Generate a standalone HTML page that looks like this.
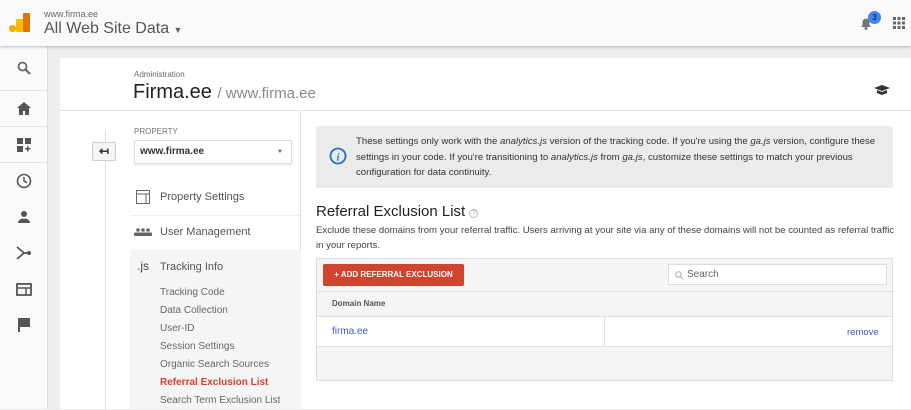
<!DOCTYPE html>
<html><head><meta charset="utf-8"><style>
*{box-sizing:border-box;margin:0;padding:0}
body{width:911px;height:409px;overflow:hidden;background:#ededed;font-family:"Liberation Sans",Arial,sans-serif;position:relative;color:#333}
.hdr{position:absolute;left:0;top:0;width:911px;height:46px;background:#fafafa;box-shadow:0 1px 3px rgba(0,0,0,.25);z-index:3}
.nav{position:absolute;left:0;top:46px;width:48px;height:363px;background:#fafafa;border-right:1px solid #ddd}
.nav .i{height:36px;display:flex;align-items:center;justify-content:center}
.card{position:absolute;left:60px;top:58px;width:851px;height:351px;background:#fff}
.abs{position:absolute}
.sub a{display:block;font-size:10px;color:#666;height:18px;line-height:18px}
</style></head><body>
<div class="hdr">
 <svg class="abs" style="left:9px;top:12px" width="21" height="21"><rect x="0" y="13" width="7" height="7" rx="3" fill="#f9ab00"/><rect x="7" y="7" width="7" height="13" rx="1" fill="#fbbc04"/><rect x="14" y="1" width="7" height="19" rx="1" fill="#e37400"/></svg>
 <div class="abs" style="left:44px;top:9px;font-size:9px;color:#666">www.firma.ee</div>
 <div class="abs" style="left:44px;top:20px;font-size:16px;color:#555">All Web Site Data <span style="font-size:9px;color:#666">▼</span></div>
 <svg class="abs" style="left:859px;top:16px" width="14" height="14"><path d="M2 11h10l-1.5-2V6a3.5 3.5 0 0 0-7 0v3z" fill="#757575"/><circle cx="7" cy="12.5" r="1.5" fill="#757575"/></svg>
 <div class="abs" style="left:868px;top:11px;width:13px;height:13px;border-radius:50%;background:#4285f4;color:#111;font-size:8px;text-align:center;line-height:13px">3</div>
 <svg class="abs" style="left:893px;top:17px" width="12" height="12" fill="#666"><rect x="0" y="0" width="3" height="3"/><rect x="4.5" y="0" width="3" height="3"/><rect x="9" y="0" width="3" height="3"/><rect x="0" y="4.5" width="3" height="3"/><rect x="4.5" y="4.5" width="3" height="3"/><rect x="9" y="4.5" width="3" height="3"/><rect x="0" y="9" width="3" height="3"/><rect x="4.5" y="9" width="3" height="3"/><rect x="9" y="9" width="3" height="3"/></svg>
</div>
<div class="nav">
 <div class="i" style="border-bottom:1px solid #e5e5e5;height:45px"><svg width="14" height="14"><circle cx="5.5" cy="5.5" r="4" stroke="#666" stroke-width="1.8" fill="none"/><path d="M8.5 8.5l4.5 4.5" stroke="#666" stroke-width="2"/></svg></div>
 <div class="i" style="border-bottom:1px solid #e5e5e5"><svg width="14" height="13"><path d="M7 0L0 6h2v7h4V9h2v4h4V6h2z" fill="#555"/></svg></div>
 <div class="i" style="border-bottom:1px solid #e5e5e5"><svg width="14" height="14" fill="#555"><rect x="0" y="0" width="6" height="6"/><rect x="8" y="0" width="6" height="6"/><rect x="0" y="8" width="6" height="6"/><path d="M10 8h1.5v2h2v1.5h-2v2H10v-2H8V10h2z"/></svg></div>
 <div class="i"><svg width="16" height="16"><circle cx="8" cy="8" r="6.5" stroke="#555" stroke-width="1.6" fill="none"/><path d="M8 4v4l3 2" stroke="#555" stroke-width="1.5" fill="none"/></svg></div>
 <div class="i"><svg width="14" height="14" fill="#555"><circle cx="7" cy="4" r="3"/><path d="M1 13c0-3 3-4.5 6-4.5s6 1.5 6 4.5z"/></svg></div>
 <div class="i"><svg width="16" height="14"><path d="M1 1l7 6M1 13l7-6h6" stroke="#555" stroke-width="1.8" fill="none"/><circle cx="13" cy="7" r="2" fill="#555"/></svg></div>
 <div class="i"><svg width="16" height="13"><rect x="1" y="1" width="14" height="11" stroke="#555" stroke-width="1.8" fill="none"/><path d="M1 5h14M10 5v7" stroke="#555" stroke-width="1.5"/></svg></div>
 <div class="i"><svg width="12" height="14"><path d="M1 0v14M1 1h10v7H1" stroke="#555" stroke-width="2" fill="#555"/></svg></div>
</div>
<div class="card">
 <div class="abs" style="left:0;top:0;width:851px;height:53px;border-bottom:1px solid #e0e0e0"></div>
 <div class="abs" style="left:74px;top:12px;font-size:8px;color:#666">Administration</div>
 <div class="abs" style="left:73px;top:23px;font-size:20px;color:#222">Firma.ee <span style="font-size:15px;color:#888">/ www.firma.ee</span></div>
 <svg class="abs" style="left:814px;top:27px" width="16" height="10"><path d="M0 3L8 0l8 3-8 3z" fill="#333"/><path d="M3 5v3l5 2 5-2V5L8 7z" fill="#333"/></svg>
 <div class="abs" style="left:240px;top:53px;width:1px;height:298px;background:#e0e0e0"></div>
 <div class="abs" style="left:45px;top:72px;width:1px;height:280px;background:#ddd"></div>
 <div class="abs" style="left:32px;top:84px;width:24px;height:19px;background:#f5f5f5;border:1px solid #ccc;border-radius:2px;font-size:12px;text-align:center;line-height:17px;font-weight:bold">↤</div>
 <div class="abs" style="left:74px;top:69px;font-size:8px;color:#777">PROPERTY</div>
 <div class="abs" style="left:74px;top:82px;width:158px;height:24px;border:1px solid #ddd;border-radius:2px;box-shadow:0 1px 2px rgba(0,0,0,.1);font-size:10px;font-weight:bold;line-height:22px;padding-left:5px;color:#333">www.firma.ee<span style="position:absolute;right:8px;font-size:6px;color:#666">▼</span></div>
 <svg class="abs" style="left:76px;top:132px" width="14" height="14"><rect x=".5" y=".5" width="13" height="13" fill="none" stroke="#666"/><path d="M.5 4h13M10 4v10" stroke="#666"/></svg>
 <div class="abs" style="left:100px;top:133px;font-size:11px;color:#555">Property Settings</div>
 <div class="abs" style="left:70px;top:157px;width:170px;height:1px;background:#eee"></div>
 <svg class="abs" style="left:74px;top:170px" width="18" height="8" fill="#666"><circle cx="4" cy="2" r="1.8"/><circle cx="9" cy="2" r="1.8"/><circle cx="14" cy="2" r="1.8"/><rect x="0" y="4.5" width="18" height="3.5" rx="1"/></svg>
 <div class="abs" style="left:100px;top:168px;font-size:11px;color:#555">User Management</div>
 <div class="abs" style="left:70px;top:192px;width:171px;height:159px;background:#f5f5f5"></div>
 <div class="abs" style="left:77px;top:201px;font-size:12px;color:#444">.js</div>
 <div class="abs" style="left:100px;top:203px;font-size:11px;color:#555">Tracking Info</div>
 <div class="abs sub" style="left:100px;top:226px">
  <a>Tracking Code</a><a>Data Collection</a><a>User-ID</a><a>Session Settings</a><a>Organic Search Sources</a><a style="color:#d23f31;font-weight:bold">Referral Exclusion List</a><a>Search Term Exclusion List</a>
 </div>
 <div class="abs" style="left:256px;top:68px;width:577px;height:62px;background:#ebebeb;border-radius:2px"></div>
 <svg class="abs" style="left:269px;top:89px" width="18" height="18"><circle cx="9" cy="9" r="7.5" stroke="#1e74c8" stroke-width="1.8" fill="none"/><text x="9" y="13.5" text-anchor="middle" font-size="11" font-style="italic" font-weight="bold" fill="#1e74c8" font-family="Liberation Serif">i</text></svg>
 <div class="abs" style="left:296px;top:76px;width:530px;font-size:9.6px;line-height:15.5px;color:#333">These settings only work with the <i>analytics.js</i> version of the tracking code. If you're using the <i>ga.js</i> version, configure these settings in your code. If you're transitioning to <i>analytics.js</i> from <i>ga.js</i>, customize these settings to match your previous configuration for data continuity.</div>
 <div class="abs" style="left:256px;top:145px;font-size:15px;color:#222">Referral Exclusion List <span style="display:inline-block;width:9px;height:9px;border:1px solid #bbb;border-radius:50%;font-size:7px;line-height:8px;text-align:center;color:#aaa;vertical-align:1px">?</span></div>
 <div class="abs" style="left:256px;top:165px;width:580px;font-size:9.6px;line-height:15px;color:#444">Exclude these domains from your referral traffic. Users arriving at your site via any of these domains will not be counted as referral traffic in your reports.</div>
 <div class="abs" style="left:256px;top:200px;width:577px;height:123px;background:#f5f5f5;border:1px solid #ddd"></div>
 <div class="abs" style="left:263px;top:206px;width:141px;height:22px;background:#d0432f;border-radius:2px;color:#fff;font-size:8px;font-weight:bold;text-align:center;line-height:22px">+ ADD REFERRAL EXCLUSION</div>
 <div class="abs" style="left:608px;top:206px;width:219px;height:21px;background:#fff;border:1px solid #ddd;font-size:10px;color:#666;line-height:19px;padding-left:18px">Search<svg style="position:absolute;left:6px;top:6px" width="9" height="9"><circle cx="3.5" cy="3.5" r="2.7" stroke="#aaa" fill="none"/><path d="M5.5 5.5L8.5 8.5" stroke="#aaa"/></svg></div>
 <div class="abs" style="left:257px;top:233px;width:575px;height:1px;background:#ddd"></div>
 <div class="abs" style="left:272px;top:241px;font-size:8px;font-weight:bold;color:#555">Domain Name</div>
 <div class="abs" style="left:257px;top:258px;width:575px;height:31px;background:#fff;border-top:1px solid #ddd;border-bottom:1px solid #ddd"></div>
 <div class="abs" style="left:544px;top:259px;width:1px;height:30px;background:#ddd"></div>
 <div class="abs" style="left:272px;top:268px;font-size:10px;color:#3b5fc4">firma.ee</div>
 <div class="abs" style="left:787px;top:269px;font-size:9.5px;color:#3b5fc4">remove</div>
</div>
</body></html>
